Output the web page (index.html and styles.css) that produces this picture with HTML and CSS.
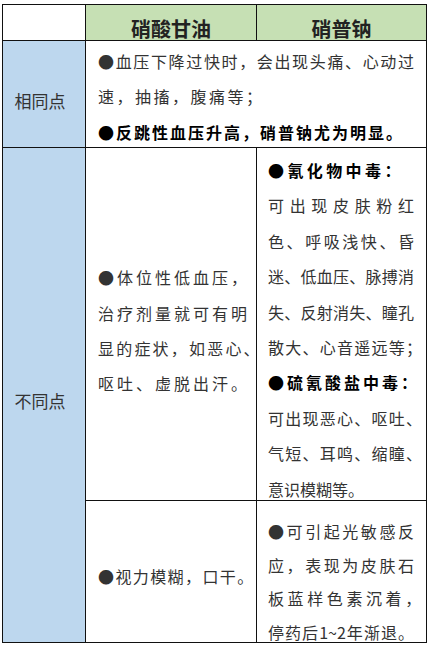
FILE: index.html
```html
<!DOCTYPE html>
<html lang="zh-CN">
<head>
<meta charset="utf-8">
<title>硝酸甘油与硝普钠</title>
<link rel="stylesheet" href="styles.css">
</head>
<body>
<div class="sheet">
  <div class="cell corner"></div>
  <div class="cell head">硝酸甘油</div>
  <div class="cell head">硝普钠</div>

  <div class="cell label same">相同点</div>
  <div class="cell text common">
    <div class="ln j">●血压下降过快时，会出现头痛、心动过</div>
    <div class="ln ls-a">速，抽搐，腹痛等；</div>
    <div class="ln b ls-b">●反跳性血压升高，硝普钠尤为明显。</div>
  </div>

  <div class="cell label diff">不同点</div>
  <div class="cell text mid">
    <div class="lines">
      <div class="ln">●体位性低血压，</div>
      <div class="ln">治疗剂量就可有明</div>
      <div class="ln tight">显的症状，如恶心、</div>
      <div class="ln">呕吐、虚脱出汗。</div>
    </div>
  </div>
  <div class="cell text c3">
    <div class="ln b ls-c">●氰化物中毒：</div>
    <div class="ln j">可出现皮肤粉红</div>
    <div class="ln j">色、呼吸浅快、昏</div>
    <div class="ln j">迷、低血压、脉搏消</div>
    <div class="ln j">失、反射消失、瞳孔</div>
    <div class="ln ls-p">散大、心音遥远等；</div>
    <div class="ln b ls-d">●硫氰酸盐中毒：</div>
    <div class="ln ls-p">可出现恶心、呕吐、</div>
    <div class="ln ls-p">气短、耳鸣、缩瞳、</div>
    <div class="ln">意识模糊等。</div>
  </div>

  <div class="cell text mid solo">
    <div class="ln">●视力模糊，口干。</div>
  </div>
  <div class="cell text c3 c3b">
    <div class="ln j">●可引起光敏感反</div>
    <div class="ln j">应，表现为皮肤石</div>
    <div class="ln ls-q">板蓝样色素沉着，</div>
    <div class="ln j">停药后1~2年渐退。</div>
  </div>
</div>
</body>
</html>
```
FILE: styles.css
```css
* {
  box-sizing: border-box;
}

html,
body {
  margin: 0;
  background: #ffffff;
}

body {
  padding: 4px 0 0 2px;
  font-family: "Noto Sans CJK SC", "Noto Sans", sans-serif;
  color: #333333;
}

.sheet {
  display: grid;
  grid-template-columns: 82px 170px 169px;
  grid-template-rows: 35px 106px 352px 141px;
  gap: 1px;
  padding: 1px;
  background: #111111;
  width: max-content;
}

.cell {
  background: #ffffff;
  min-width: 0;
}

.head {
  background: #c6e0b4;
  display: flex;
  justify-content: center;
  align-items: center;
  padding-top: 13px;
  font-size: 20px;
  font-weight: 700;
  line-height: 1;
  color: #222222;
}

.label {
  background: #bdd7ee;
  display: flex;
  justify-content: center;
  align-items: center;
  padding-right: 8px;
  font-size: 17px;
  color: #333333;
}

.same {
  padding-top: 12px;
}

.diff {
  grid-row: 3 / span 2;
  padding-top: 10px;
}

.text {
  font-size: 16px;
  line-height: 35.4px;
}

.ln {
  white-space: nowrap;
}

.ln.j {
  white-space: normal;
  text-align: justify;
  text-align-last: justify;
}

.b {
  font-weight: 700;
  color: #000000;
}

.common {
  grid-column: 2 / span 2;
  padding: 3px 12px 0;
}

.common .j {
  width: 316px;
}

.ls-a {
  letter-spacing: 2.5px;
}

.ls-b {
  letter-spacing: 2px;
}

.ls-c {
  letter-spacing: 3.4px;
}

.ls-d {
  letter-spacing: 3px;
}

.ls-p {
  letter-spacing: 1.25px;
}

.ls-q {
  letter-spacing: 3.6px;
}

.mid {
  display: flex;
  align-items: center;
  padding: 14px 0 0 12px;
}

.mid .ln {
  letter-spacing: 3px;
}

.mid .ln.tight {
  letter-spacing: 2.2px;
}

.solo {
  padding-top: 11px;
}

.solo .ln {
  letter-spacing: 1.4px;
}

.c3 {
  padding: 5px 1px 0 11px;
}

.c3 .j {
  width: 146px;
}

.c3b {
  padding-top: 14px;
  line-height: 33.7px;
}
```
